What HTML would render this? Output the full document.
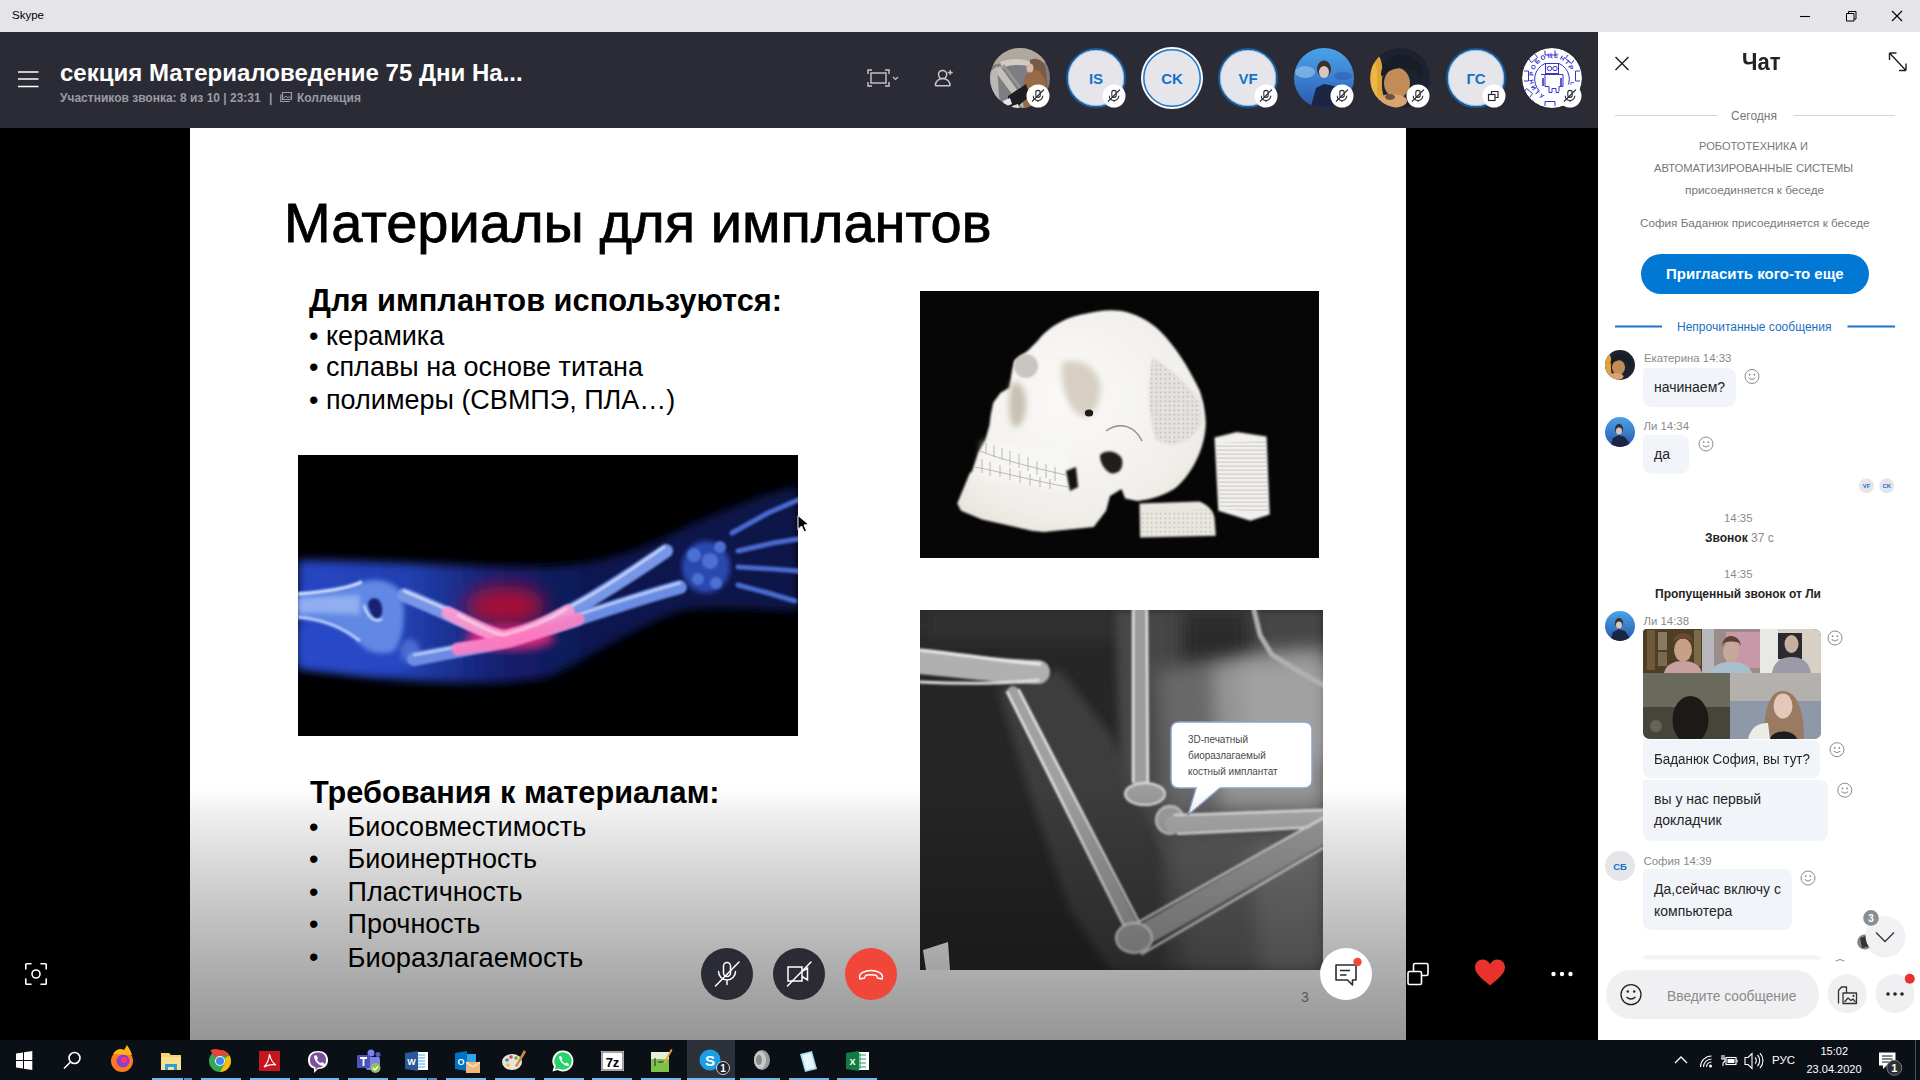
<!DOCTYPE html>
<html><head><meta charset="utf-8">
<style>
*{margin:0;padding:0;box-sizing:border-box}
html,body{width:1920px;height:1080px;overflow:hidden}
body{position:relative;font-family:"Liberation Sans",sans-serif;background:#000}
.a{position:absolute}
.t{position:absolute;white-space:nowrap;line-height:1}
svg{position:absolute;overflow:visible}
</style></head><body>

<!-- ===== title bar ===== -->
<div class="a" style="left:0;top:0;width:1920px;height:32px;background:#e5e4e9"></div>
<div class="t" style="left:12px;top:10px;font-size:11.5px;color:#000">Skype</div>
<svg style="left:0;top:0" width="1920" height="32">
  <path d="M1800 16.5H1810" stroke="#000" stroke-width="1.1"/>
  <path d="M1846.5 13.5h7.5v7.5h-7.5z M1848.5 13.5v-2h7.5v7.5h-2" fill="none" stroke="#000" stroke-width="1"/>
  <path d="M1892 11L1902 21M1902 11L1892 21" stroke="#000" stroke-width="1.1"/>
</svg>

<!-- ===== header ===== -->
<div class="a" style="left:0;top:32px;width:1598px;height:96px;background:#2b2b35"></div>
<svg style="left:0;top:32px" width="1598" height="96">
  <path d="M18 40H38.5M18 47H38.5M18 54.5H38.5" stroke="#fff" stroke-width="1.6"/>
</svg>
<div class="t" style="left:60px;top:61px;font-size:24px;font-weight:700;color:#fff">секция Материаловедение 75 Дни На...</div>
<div class="t" style="left:60px;top:91.5px;font-size:12px;font-weight:700;color:#9b9ba3">Участников звонка: 8 из 10 | 23:31</div>
<div class="t" style="left:269px;top:91.5px;font-size:12px;font-weight:700;color:#9b9ba3">|</div>
<svg style="left:280px;top:89px" width="14" height="14">
  <path d="M2.5 3.5h9v7h-9z" fill="none" stroke="#9b9ba3" stroke-width="1.2"/>
  <path d="M0.8 5.5v7h9" fill="none" stroke="#9b9ba3" stroke-width="1.2"/>
  <path d="M3.5 9.5l2.5-2.5 2 2 1.5-1.5 2 2" fill="none" stroke="#9b9ba3" stroke-width="1"/>
</svg>
<div class="t" style="left:297px;top:91.5px;font-size:12px;font-weight:700;color:#9b9ba3">Коллекция</div>

<!-- header icons -->
<svg style="left:860px;top:60px" width="110" height="36">
  <!-- screen frame icon -->
  <g fill="none" stroke="#c8c8cc" stroke-width="1.4">
    <rect x="11" y="13" width="15" height="10"/>
    <path d="M8 14v-4h4 M25 10h4v4 M29 22v4h-4 M12 26h-4v-4"/>
    <path d="M33 17l2.5 2.5 2.5-2.5" stroke-width="1.1"/>
  </g>
  <!-- add person -->
  <g fill="none" stroke="#c8c8cc" stroke-width="1.5">
    <circle cx="82.6" cy="14.5" r="4.1"/>
    <path d="M75.3 25.8h14.8 M75.3 25.8c0-4.6 3.3-7.3 7.4-7.3s7.4 2.7 7.4 7.3"/>
    <path d="M90.2 10v5 M87.7 12.5h5" stroke-width="1.3"/>
  </g>
</svg>

<!-- avatars -->
<svg style="left:0;top:0" width="1598" height="128">
  <defs>
    <clipPath id="c1"><circle cx="1020" cy="78" r="30"/></clipPath>
    <clipPath id="c5"><circle cx="1324" cy="78" r="30"/></clipPath>
    <clipPath id="c6"><circle cx="1400" cy="78" r="30"/></clipPath>
    <clipPath id="c8"><circle cx="1552" cy="78" r="30"/></clipPath>
    <linearGradient id="sky" x1="0" y1="0" x2="0" y2="1">
      <stop offset="0" stop-color="#4aa3ea"/><stop offset="0.5" stop-color="#3b7fd0"/><stop offset="1" stop-color="#2a58a8"/>
    </linearGradient>
    <g id="mic">
      <circle r="11.5" fill="#fff"/>
      <g fill="none" stroke="#2b2b35" stroke-width="1.1">
        <rect x="-2.2" y="-5.6" width="4.4" height="7" rx="2.2"/>
        <path d="M-4.8 -0.3a4.8 4.8 0 0 0 9.6 0M0 4.5v1.6"/>
        <path d="M-6 5.5L6 -6.5" stroke-width="1.1"/>
      </g>
    </g>
  </defs>
  <!-- 1 photo girl -->
  <g clip-path="url(#c1)">
    <rect x="990" y="48" width="60" height="60" fill="#7c7e84"/>
    <path d="M990 48h60v16c-14-4-34-6-60 2z" fill="#b0a89c"/>
    <path d="M1000 62 C1010 58 1022 58 1032 62 L1036 68 C1024 64 1010 64 1002 68z" fill="#d0ccc4"/>
    <path d="M1000 66 L1036 116 L1030 118 L994 70z" fill="#c4c0b8"/>
    <path d="M1004 64 L1040 112 L1038 114 L1002 66z" fill="#9a9690"/>
    <path d="M990 72 L997 66 L1000 110 L990 110z" fill="#bab8b4"/>
    <path d="M1030 60 C1038 56 1046 62 1046 72 L1048 92 L1036 92 C1032 84 1030 72 1030 60z" fill="#7a5a42"/>
    <path d="M1036 70 C1044 72 1048 84 1048 100 L1046 112 L1024 112 C1022 98 1022 84 1026 74z" fill="#9a6a48"/>
    <ellipse cx="1030" cy="68" rx="3.5" ry="4.5" fill="#d8b8a8"/>
    <path d="M1008 96 L1026 84 L1030 96 L1016 108 L1008 106z" fill="#1e1e22"/>
    <path d="M1003 101 L1010 98 L1012 104 L1005 107z" fill="#e8e8ea"/>
    <path d="M1012 106 L1018 104 L1020 110 L1013 112z" fill="#e0e0e2"/>
  </g>
  <!-- 2 IS -->
  <circle cx="1096" cy="78" r="29" fill="#e6e6ea" stroke="#195a98" stroke-width="2"/>
  <circle cx="1096" cy="78" r="27.6" fill="none" stroke="#7fb6ea" stroke-width="0.8"/>
  <text x="1096" y="83.6" text-anchor="middle" font-family="Liberation Sans" font-weight="700" font-size="15" fill="#1572cc">IS</text>
  <!-- 3 CK -->
  <circle cx="1172" cy="78" r="31" fill="#fff"/>
  <circle cx="1172" cy="78" r="29.4" fill="#e6e6ea"/>
  <circle cx="1172" cy="78" r="28.2" fill="none" stroke="#1e78cf" stroke-width="1.5"/>
  <text x="1172" y="83.6" text-anchor="middle" font-family="Liberation Sans" font-weight="700" font-size="15" fill="#1572cc">CK</text>
  <!-- 4 VF -->
  <circle cx="1248" cy="78" r="29" fill="#e6e6ea" stroke="#195a98" stroke-width="2"/>
  <circle cx="1248" cy="78" r="27.6" fill="none" stroke="#7fb6ea" stroke-width="0.8"/>
  <text x="1248" y="83.6" text-anchor="middle" font-family="Liberation Sans" font-weight="700" font-size="15" fill="#1572cc">VF</text>
  <!-- 5 photo blue -->
  <g clip-path="url(#c5)">
    <rect x="1294" y="48" width="60" height="60" fill="url(#sky)"/>
    <ellipse cx="1305" cy="72" rx="10" ry="6" fill="#8fc0ee" opacity="0.7"/>
    <ellipse cx="1343" cy="76" rx="9" ry="4" fill="#3466b8" opacity="0.8"/>
    <ellipse cx="1324" cy="69" rx="7" ry="8.5" fill="#3a3030"/>
    <ellipse cx="1324" cy="72" rx="5" ry="6" fill="#d9c6c0"/>
    <path d="M1310 110 L1316 88 L1324 84 L1334 86 L1342 96 L1346 110z" fill="#1c2644"/>
  </g>
  <!-- 6 photo woman -->
  <g clip-path="url(#c6)">
    <rect x="1370" y="48" width="60" height="60" fill="#1c2230"/>
    <path d="M1368 52 C1380 50 1384 62 1382 80 C1381 94 1385 102 1392 110 L1368 110 Z" fill="#dfa338"/>
    <path d="M1372 60 C1378 64 1378 76 1377 88 C1377 96 1380 102 1384 108 L1370 108z" fill="#f0c050" opacity="0.7"/>
    <ellipse cx="1397" cy="83" rx="13" ry="15" fill="#c28c58"/>
    <path d="M1381 74 C1382 58 1398 52 1410 56 C1420 60 1424 70 1422 80 L1416 72 C1406 66 1394 66 1381 76z" fill="#181d28"/>
    <ellipse cx="1392" cy="101" rx="15" ry="7" fill="#d9a472"/>
    <ellipse cx="1390" cy="97" rx="5" ry="3" fill="#2a1a14" opacity="0.6"/>
  </g>
  <!-- 7 ГС -->
  <circle cx="1476" cy="78" r="29" fill="#e6e6ea" stroke="#195a98" stroke-width="2"/>
  <circle cx="1476" cy="78" r="27.6" fill="none" stroke="#7fb6ea" stroke-width="0.8"/>
  <text x="1476" y="83.6" text-anchor="middle" font-family="Liberation Sans" font-weight="700" font-size="15" fill="#1572cc">ГС</text>
  <!-- 8 robot logo -->
  <g clip-path="url(#c8)">
    <rect x="1522" y="48" width="60" height="60" fill="#2b2b35"/>
    <circle cx="1552" cy="78" r="30" fill="#fff"/>
    <path id="arcTop" d="M1533.5 76 A18 18 0 0 1 1570.5 76" fill="none"/>
    <path id="arcBot" d="M1529 80 A23 23 0 0 0 1546 100" fill="none"/>
    <g fill="none" stroke="#3434c8" stroke-width="1">
      <path d="M1545 50.5v4.5h10v-4.5 M1568 55l-2.5 3.5 6 5 2.5-3.5 M1580 71h-4.5v10h4.5 M1574 93l-2.5-3.5-6 5 2.5 3.5 M1545 106v-4.5h10v4.5 M1530 97l2.5-3.5-6-5-2.5 3.5 M1524 81h4.5v-10h-4.5 M1529 59l2.5 3.5 6-5-2.5-3.5"/>
      <path d="M1539.5 91A17 17 0 0 1 1545 63.5 M1559 63.5A17 17 0 0 1 1564.5 91"/>
      <rect x="1545.5" y="63.5" width="13" height="10"/>
      <circle cx="1549.5" cy="68.5" r="2.2"/><circle cx="1555" cy="68.5" r="2.2"/>
      <path d="M1541 74.5h22v12h-4v6h-3v-4h-4v4h-3v-6h-4v-12z"/>
      <path d="M1543 78v8 M1561 78v8" stroke-width="1.6"/>
    </g>
    <text font-family="Liberation Sans" font-weight="700" font-size="6.2" fill="#3030d0"><textPath href="#arcTop" textLength="52" lengthAdjust="spacing">РОБОЦЕНТР</textPath></text>
    <text font-family="Liberation Sans" font-weight="700" font-size="6" fill="#3030d0"><textPath href="#arcBot" textLength="24" lengthAdjust="spacing">НИТУ</textPath></text>
    <text x="1570" y="86" font-family="Liberation Sans" font-weight="700" font-size="6" fill="#3030d0">С</text>
  </g>
  <use href="#mic" x="1038" y="96"/>
  <use href="#mic" x="1114" y="96"/>
  <use href="#mic" x="1266" y="96"/>
  <use href="#mic" x="1342" y="96"/>
  <use href="#mic" x="1418" y="96"/>
  <use href="#mic" x="1570" y="96"/>
  <circle cx="1494" cy="96" r="11.5" fill="#fff"/>
  <g fill="none" stroke="#2b2b35" stroke-width="1.2">
    <rect x="1488.5" y="94.5" width="6.5" height="6"/>
    <path d="M1491.5 94.5v-3h6.5v6h-3"/>
  </g>
</svg>

<!-- ===== left / right black ===== -->
<div class="a" style="left:0;top:128px;width:190px;height:912px;background:#000"></div>
<div class="a" style="left:1406px;top:128px;width:192px;height:912px;background:#000"></div>

<!-- ===== slide ===== -->
<div id="slide" class="a" style="left:190px;top:128px;width:1216px;height:912px;background:#fff;overflow:hidden">
</div>
<div class="t" style="left:284px;top:194.5px;font-size:56px;color:#000;-webkit-text-stroke:0.8px #000">Материалы для имплантов</div>
<div class="t" style="left:309px;top:285.5px;font-size:30.8px;font-weight:700;color:#000">Для имплантов используются:</div>
<div class="t" style="left:309px;top:322.6px;font-size:27px;color:#000">•</div>
<div class="t" style="left:326px;top:322.6px;font-size:27px;color:#000">керамика</div>
<div class="t" style="left:309px;top:354.3px;font-size:27px;color:#000">•</div>
<div class="t" style="left:326px;top:354.3px;font-size:27px;color:#000">сплавы на основе титана</div>
<div class="t" style="left:309px;top:386.7px;font-size:27px;color:#000">•</div>
<div class="t" style="left:326px;top:386.7px;font-size:27px;color:#000">полимеры (СВМПЭ, ПЛА…)</div>

<div class="t" style="left:310px;top:777.5px;font-size:30.7px;font-weight:700;color:#000">Требования к материалам:</div>
<div class="t" style="left:309px;top:813.8px;font-size:27px;color:#000">•</div>
<div class="t" style="left:347.5px;top:813.8px;font-size:27px;color:#000">Биосовместимость</div>
<div class="t" style="left:309px;top:846.3px;font-size:27px;color:#000">•</div>
<div class="t" style="left:347.5px;top:846.3px;font-size:27px;color:#000">Биоинертность</div>
<div class="t" style="left:309px;top:878.9px;font-size:27px;color:#000">•</div>
<div class="t" style="left:347.5px;top:878.9px;font-size:27px;color:#000">Пластичность</div>
<div class="t" style="left:309px;top:911.4px;font-size:27px;color:#000">•</div>
<div class="t" style="left:347.5px;top:911.4px;font-size:27px;color:#000">Прочность</div>
<div class="t" style="left:309px;top:943.5px;font-size:27px;color:#000">•</div>
<div class="t" style="left:347.5px;top:943.5px;font-size:27.3px;color:#000">Биоразлагаемость</div>
<div class="t" style="left:1301px;top:990px;font-size:14px;color:#8a8a8a">3</div>

<!-- IMAGES -->
<div id="img-arm" class="a" style="left:298px;top:455px;width:500px;height:281px;background:#000;overflow:hidden">
<svg style="left:0;top:0" width="500" height="281" viewBox="0 0 500 281">
  <defs>
    <filter id="b6" x="-20%" y="-20%" width="140%" height="140%"><feGaussianBlur stdDeviation="5"/></filter>
    <filter id="b3" x="-30%" y="-30%" width="160%" height="160%"><feGaussianBlur stdDeviation="2.5"/></filter>
    <filter id="b1" x="-30%" y="-30%" width="160%" height="160%"><feGaussianBlur stdDeviation="0.9"/></filter>
    <filter id="b12" x="-50%" y="-50%" width="200%" height="200%"><feGaussianBlur stdDeviation="10"/></filter>
    <linearGradient id="st" x1="0" y1="0" x2="1" y2="0">
      <stop offset="0" stop-color="#2846c4"/><stop offset="0.22" stop-color="#2240b0"/><stop offset="0.4" stop-color="#142070"/><stop offset="0.6" stop-color="#0e1850"/><stop offset="1" stop-color="#0c1548"/>
    </linearGradient>
  </defs>
  <!-- soft tissue -->
  <path d="M0 105 C80 106 180 112 250 112 C300 110 340 95 368 82 C390 70 410 62 428 55 C450 46 475 36 500 31 L500 156 C460 156 420 150 383 156 C330 175 290 205 250 222 C180 235 90 225 0 213 Z" fill="url(#st)" filter="url(#b6)"/>
  <path d="M0 170 C40 172 80 180 110 196 C130 210 100 222 60 218 C40 215 20 214 0 212 Z" fill="#2a4ccc" filter="url(#b6)" opacity="0.7"/>
  <!-- humerus + elbow -->
  <path d="M0 139 C30 137 50 133 64 127 C80 122 98 126 104 140 C108 160 106 185 96 196 C80 202 66 196 58 184 C45 172 25 165 0 163 Z" fill="#6088e4" filter="url(#b3)"/>
  <path d="M0 143 C30 141 50 140 62 140 L62 160 C40 158 20 158 0 158 Z" fill="#9cb8f4" filter="url(#b3)" opacity="0.8"/>
  <path d="M0 139 C30 137 50 133 64 127" fill="none" stroke="#d0e0ff" stroke-width="3.5" filter="url(#b1)"/>
  <path d="M0 162 C25 164 45 172 62 186" fill="none" stroke="#b8d0ff" stroke-width="3" filter="url(#b1)"/>
  <path d="M70 150 C70 140 86 140 84 158 C82 166 74 166 70 150z" fill="#142070" filter="url(#b1)"/>
  <path d="M66 150 C70 164 78 168 84 164" fill="none" stroke="#e0ecff" stroke-width="2" filter="url(#b1)"/>
  <ellipse cx="112" cy="196" rx="10" ry="12" fill="#4a6cd0" filter="url(#b3)"/>
  <!-- forearm bones -->
  <g fill="none" stroke-linecap="round" filter="url(#b1)">
    <path d="M106 140 C150 158 185 176 206 182 C260 170 320 128 368 96" stroke="#7896e6" stroke-width="14"/>
    <path d="M106 136 C150 154 185 172 206 178 C260 166 320 124 366 92" stroke="#d8e6ff" stroke-width="2"/>
    <path d="M116 204 C160 196 190 190 210 186 C270 168 330 146 382 132" stroke="#6c8ce4" stroke-width="14"/>
    <path d="M116 200 C160 192 190 186 210 182 C270 164 330 142 382 128" stroke="#c8dafc" stroke-width="2"/>
  </g>
  <!-- wrist & hand -->
  <ellipse cx="408" cy="112" rx="24" ry="26" fill="#2c48b0" filter="url(#b3)"/>
  <g fill="#4e70d4" filter="url(#b1)"><circle cx="396" cy="100" r="7"/><circle cx="412" cy="106" r="8"/><circle cx="400" cy="124" r="6"/><circle cx="418" cy="128" r="6"/><circle cx="422" cy="92" r="6"/></g>
  <g stroke="#4a6ad0" stroke-width="5" stroke-linecap="round" filter="url(#b1)">
    <path d="M434 78 L470 58 L500 45"/><path d="M440 96 L475 88 L500 84"/><path d="M440 112 L475 114 L500 116"/><path d="M440 130 L470 138 L497 146"/>
  </g>
  <!-- red glow -->
  <ellipse cx="207" cy="151" rx="40" ry="20" fill="#b00c36" filter="url(#b12)" opacity="0.95"/>
  <ellipse cx="212" cy="183" rx="45" ry="12" fill="#ff2a80" filter="url(#b6)" opacity="0.8"/>
  <g fill="none" stroke-linecap="round" filter="url(#b1)" opacity="0.9">
    <path d="M150 158 C185 176 195 180 206 182 C230 177 250 168 270 156" stroke="#ff9ad0" stroke-width="13"/>
    <path d="M160 194 C190 190 200 188 210 186 C235 179 255 172 280 164" stroke="#ff80c4" stroke-width="13"/>
    <path d="M160 160 C190 176 200 180 206 180 C230 174 250 166 268 154" stroke="#ffe0f0" stroke-width="2"/>
  </g>
</svg>
</div>
<div id="img-skull" class="a" style="left:920px;top:291px;width:399px;height:267px;background:#060606;overflow:hidden">
<svg style="left:0;top:0" width="399" height="267" viewBox="0 0 399 267">
  <defs>
    <radialGradient id="sk" cx="0.45" cy="0.4" r="0.85">
      <stop offset="0" stop-color="#fbfaf8"/><stop offset="0.6" stop-color="#f1efea"/><stop offset="1" stop-color="#dcd7cc"/>
    </radialGradient>
    <filter id="sb" x="-20%" y="-20%" width="140%" height="140%"><feGaussianBlur stdDeviation="1"/></filter>
    <filter id="sb3" x="-30%" y="-30%" width="160%" height="160%"><feGaussianBlur stdDeviation="3"/></filter>
    <pattern id="dots" width="4.5" height="4.5" patternUnits="userSpaceOnUse"><circle cx="2.2" cy="2.2" r="0.9" fill="#77716a"/></pattern>
    <pattern id="grid" width="3.5" height="4" patternUnits="userSpaceOnUse"><rect width="3.5" height="1.2" y="2.5" fill="#b8b4ac"/></pattern>
  </defs>
  <path d="M69.5 134 L70.7 124 L73.2 111.7 L80.6 101.7 L89.3 96.8 L91.8 80.6 L94.3 69.5 L108 59.6 L117.9 49.6 C125 40 140 28 161.3 23.6 C175 20 190 18 200 19.8 C215 22 230 30 240 40 C255 55 268 75 279.6 99.3 C284 112 286 125 285.8 134 C285 148 281 160 276 170 C270 182 262 192 254.8 197.5 C245 204 230 209 217.6 209.9 L205.2 207.4 L201.5 198 L190 205 L186.1 219.8 L173.7 236 L161.3 237.2 L124 241 L111.7 239.7 L62 228.5 L41 219.8 L37.2 212.4 L49.6 182.6 L52.1 180.1 L58.3 161.5 L65 150 Z" fill="url(#sk)" filter="url(#sb)"/>
  <!-- shading on face -->
  <path d="M62 150 L146 158 L150 200 L58 186 Z" fill="#f8f8f6" filter="url(#sb3)" opacity="0.7"/>
  <path d="M142 72 C156 66 176 74 180 92 C182 108 176 122 166 126 C150 124 140 100 142 72z" fill="#d6cfc2" filter="url(#sb3)"/>
  <ellipse cx="169" cy="122" rx="4.2" ry="3.6" fill="#1e1a16"/>
  <ellipse cx="106" cy="75" rx="12" ry="12" fill="#c9c5c0" filter="url(#sb)"/>
  <path d="M92 92 C98 88 106 96 106 112 C106 128 100 138 94 136 C88 130 88 104 92 92z" fill="#c7bfb0" filter="url(#sb3)"/>
  <path d="M186 140 C200 130 215 135 222 150" fill="none" stroke="#6a6258" stroke-width="1.5" opacity="0.7"/>
  <!-- dark gaps -->
  <path d="M146 180 L156 176 L158 196 L150 200z" fill="#141210" filter="url(#sb)"/>
  <path d="M180 164 C186 158 198 160 202 168 C204 178 198 184 190 182 C184 178 180 172 180 164z" fill="#231f1b" filter="url(#sb)"/>
  <!-- teeth -->
  <g stroke="#a8a298" stroke-width="1" opacity="0.75" fill="none">
    <path d="M60 160 C80 168 110 176 146 184"/>
    <path d="M55 176 C85 182 115 190 148 196"/>
    <path d="M66 152v10 M74 154v12 M82 157v12 M90 160v14 M99 163v14 M108 166v14 M117 170v14 M126 173v14 M135 176v14 M62 168v14 M70 171v14 M80 174v12 M90 177v12 M100 180v12 M110 183v12 M120 186v10 M130 188v10"/>
  </g>
  <!-- mesh patch -->
  <path d="M232 66 C250 76 270 94 282 112 L282 132 C276 146 264 154 250 154 L236 150 C228 130 226 100 232 66z" fill="#e4e2de" filter="url(#sb)"/>
  <path d="M232 68 C250 78 268 95 280 113 L280 131 C274 144 263 152 250 152 L238 149 C230 130 228 102 232 68z" fill="url(#dots)" opacity="0.4"/>
  <!-- blocks -->
  <path d="M219.5 212.4 L279.6 210.5 C288 214 294 220 294.5 227.3 L295.8 244.7 L220.1 246.5 Z" fill="#e9e6e0" filter="url(#sb)"/>
  <path d="M222 220 L292 218 L294 244 L222 245z" fill="url(#dots)" opacity="0.35"/>
  <path d="M294.5 146.6 L316.9 141 L346.6 145.4 L349.7 223.6 L330.5 229.8 L298.3 219.8 Z" fill="#f2f0ec" filter="url(#sb)"/>
  <path d="M296 152 L346 150 L348 222 L300 218z" fill="url(#grid)" opacity="0.6"/>
</svg>
</div>
<div id="img-cat" class="a" style="left:920px;top:610px;width:403px;height:360px;background:#262626;overflow:hidden">
<svg style="left:0;top:0" width="403" height="360" viewBox="0 0 403 360">
  <defs>
    <filter id="cb" x="-30%" y="-30%" width="160%" height="160%"><feGaussianBlur stdDeviation="9"/></filter>
    <filter id="cb4" x="-30%" y="-30%" width="160%" height="160%"><feGaussianBlur stdDeviation="4"/></filter>
    <filter id="cb2" x="-20%" y="-20%" width="140%" height="140%"><feGaussianBlur stdDeviation="0.9"/></filter>
  </defs>
  <rect width="403" height="360" fill="#262626"/>
  <rect width="200" height="30" fill="#303030" filter="url(#cb)"/>
  <!-- soft tissue -->
  <path d="M78 80 L140 60 L195 130 L235 240 L265 300 L250 360 L190 360 L150 300 L115 200 Z" fill="#3c3c3c" filter="url(#cb4)"/>
  <path d="M195 0 L403 0 L403 360 L245 360 L240 250 L200 160 Z" fill="#474747" filter="url(#cb4)"/>
  <path d="M262 0 L330 0 L330 55 L262 60 Z" fill="#2c2c2c" filter="url(#cb)"/>
  <path d="M236 60 L310 48 L403 38 L403 205 L245 205 Z" fill="#686868" filter="url(#cb)"/>
  <path d="M292 58 L340 45 L403 40 L403 200 L300 198 Z" fill="#949494" filter="url(#cb)"/>
  <path d="M320 60 L403 55 L403 150 L330 160 Z" fill="#a2a2a2" filter="url(#cb)"/>
  <path d="M245 225 L403 218 L403 360 L265 360 Z" fill="#5c5c5c" filter="url(#cb)"/>
  <path d="M330 240 L403 230 L403 360 L340 360 Z" fill="#727272" filter="url(#cb)"/>
  <!-- bones -->
  <g filter="url(#cb2)" fill="none" stroke-linecap="round">
    <path d="M0 52 C40 56 90 62 118 62" stroke="#b0b0b0" stroke-width="24"/>
    <path d="M0 40 C40 44 90 52 120 54" stroke="#ececec" stroke-width="3"/>
    <path d="M0 72 C40 74 90 74 118 70" stroke="#e0e0e0" stroke-width="3"/>
    <path d="M93 82 L212 316" stroke="#a0a0a0" stroke-width="12"/>
    <path d="M87 82 L205 318 M99 80 L219 312" stroke="#f0f0f0" stroke-width="2.2"/>
    <path d="M220 0 L220 172" stroke="#9c9c9c" stroke-width="15"/>
    <path d="M213 0 L213 172 M227 0 L228 172" stroke="#ececec" stroke-width="2.2"/>
    <ellipse cx="225" cy="184" rx="20" ry="11" fill="#9c9c9c" stroke="#e0e0e0" stroke-width="2"/>
    <circle cx="250" cy="210" r="14" fill="#a0a0a0" stroke="#cfcfcf" stroke-width="2"/>
    <path d="M255 214 L403 208" stroke="#aaaaaa" stroke-width="19"/>
    <path d="M255 205 L403 200 M258 224 L403 217" stroke="#e8e8e8" stroke-width="2.2"/>
    <path d="M215 330 L403 222" stroke="#9a9a9a" stroke-width="22"/>
    <path d="M208 318 L403 208 M222 344 L403 238" stroke="#e0e0e0" stroke-width="2.2"/>
    <ellipse cx="214" cy="328" rx="18" ry="15" fill="#a0a0a0" stroke="#e0e0e0" stroke-width="2"/>
    <path d="M334 0 L340 25 L352 45 L380 62 L403 75" stroke="#b0b0b0" stroke-width="5"/>
  </g>
  <path d="M3 340 L28 332 L30 360 L6 360 Z" fill="#f0f0f0"/>
  <!-- speech bubble -->
  <path d="M259 112 L384 112 Q392 112 392 120 L392 170 Q392 178 384 178 L300 178 L268 205 L276 178 L259 178 Q251 178 251 170 L251 120 Q251 112 259 112 Z" fill="#fff" stroke="#8aa4c8" stroke-width="1.5"/>
  <g font-family="Liberation Sans" font-size="10.5" fill="#4a4a4a" transform="translate(268 0) scale(0.95 1)">
    <text x="0" y="133">3D-печатный</text><text x="0" y="149">биоразлагаемый</text><text x="0" y="165">костный имплантат</text>
  </g>
</svg>
</div>

<!-- gradient overlay -->
<div class="a" style="left:190px;top:788px;width:1216px;height:252px;background:linear-gradient(rgba(0,0,0,0) 0%,rgba(0,0,0,0.05) 8%,rgba(0,0,0,0.13) 25%,rgba(0,0,0,0.21) 45%,rgba(0,0,0,0.29) 64%,rgba(0,0,0,0.36) 84%,rgba(0,0,0,0.41) 100%)"></div>

<svg style="left:0;top:0" width="1" height="1"><path d="M798 515.5 L798 529.5 L801.5 526 L804.2 531.8 L806.6 530.8 L804 525 L808.8 524.6 Z" fill="#000" stroke="#fff" stroke-width="1" stroke-linejoin="round"/></svg>
<!-- ===== call controls ===== -->
<svg style="left:0;top:940px" width="1598" height="70">
  <!-- screenshot icon -->
  <g fill="none" stroke="#fff" stroke-width="1.6" stroke-linecap="round">
    <path d="M25.8 29V24.5Q25.8 23.8 26.5 23.8H31 M41 23.8H45.5Q46.2 23.8 46.2 24.5V29 M46.2 39V43.5Q46.2 44.2 45.5 44.2H41 M31 44.2H26.5Q25.8 44.2 25.8 43.5V39"/>
    <circle cx="36" cy="34" r="4"/>
  </g>
  <circle cx="727" cy="34" r="26" fill="#2b2b35"/>
  <circle cx="799" cy="34" r="26" fill="#2b2b35"/>
  <circle cx="871" cy="34" r="26" fill="#f0473a"/>
  <g fill="none" stroke="#fff" stroke-width="1.5" stroke-linecap="round">
    <rect x="723.5" y="22.5" width="7" height="14" rx="3.5"/>
    <path d="M718.5 31.5a8.5 8.5 0 0 0 17 0 M727 40v4.5"/>
    <path d="M715.5 46L739 22"/>
    <path d="M788 27h14v14h-14z M802 31.5l5.5-3.5v12l-5.5-3.5"/>
    <path d="M787.5 46L811 22"/>
  </g>
  <path d="M859.5 36.5c0-3 5-6 11.5-6s11.5 3 11.5 6l-0.5 2.5-4.5-1-1-2.5c-3.5-1-7.5-1-11 0l-1 2.5-4.5 1z" fill="none" stroke="#fff" stroke-width="1.4" stroke-linejoin="round"/>
  <!-- chat button -->
  <circle cx="1346" cy="34" r="26" fill="#fff"/>
  <path d="M1336 25h20v15h-3.5v5l-5-5h-11.5z" fill="none" stroke="#2b2b35" stroke-width="1.6" stroke-linejoin="round"/>
  <path d="M1340 30.5h10 M1340 35h6.5" stroke="#2b2b35" stroke-width="1.6"/>
  <circle cx="1357.5" cy="22" r="4.2" fill="#f0473a"/>
  <!-- restore -->
  <g fill="none" stroke="#fff" stroke-width="1.6">
    <rect x="1408" y="31.5" width="13.5" height="13" rx="1.5"/>
    <path d="M1413.5 31.5v-6.5q0-1.5 1.5-1.5h11.5q1.5 0 1.5 1.5v9q0 1.5-1.5 1.5h-5"/>
  </g>
  <!-- heart -->
  <path d="M1490 45.5C1485 41 1475 34.5 1475 27.5C1475 22.5 1478.5 19.5 1482.5 19.5C1486 19.5 1488.5 21.5 1490 24C1491.5 21.5 1494 19.5 1497.5 19.5C1501.5 19.5 1505 22.5 1505 27.5C1505 34.5 1495 41 1490 45.5Z" fill="#e8322b"/>
  <circle cx="1553.5" cy="34" r="2.2" fill="#fff"/><circle cx="1562" cy="34" r="2.2" fill="#fff"/><circle cx="1570.5" cy="34" r="2.2" fill="#fff"/>
</svg>

<!-- ===== chat panel ===== -->
<div class="a" style="left:1598px;top:32px;width:322px;height:1008px;background:#fff"></div>
<svg style="left:1598px;top:32px" width="322" height="1008">
  <path d="M17.5 25L30.5 38M30.5 25L17.5 38" stroke="#222" stroke-width="1.5"/>
  <g fill="none" stroke="#222" stroke-width="1.4">
    <path d="M291.5 21L308 38.5 M291.5 21v7 M291.5 21h7 M308 38.5h-7 M308 38.5v-7"/>
  </g>
  <path d="M17 83.5H119.5 M195.5 83.5H297" stroke="#d4d4d8" stroke-width="1"/>
  <path d="M17 294.5H64 M249.5 294.5H297" stroke="#1a74cc" stroke-width="2"/>
</svg>
<div class="t" style="left:1742px;top:51.1px;font-size:23.4px;font-weight:700;color:#222;transform:scaleX(0.94);transform-origin:0 0">Чат</div>
<div class="t" style="left:1731px;top:109.5px;font-size:12px;color:#777">Сегодня</div>
<div class="t" style="left:1699px;top:141px;font-size:11.1px;color:#777">РОБОТОТЕХНИКА И</div>
<div class="t" style="left:1654px;top:163px;font-size:11.2px;color:#777">АВТОМАТИЗИРОВАННЫЕ СИСТЕМЫ</div>
<div class="t" style="left:1685px;top:185px;font-size:11.8px;color:#777">присоединяется к беседе</div>
<div class="t" style="left:1640px;top:217px;font-size:11.7px;color:#777">София Баданюк присоединяется к беседе</div>
<div class="a" style="left:1641px;top:254px;width:228px;height:39.5px;border-radius:20px;background:#0078d4"></div>
<div class="t" style="left:1666px;top:266px;font-size:15px;font-weight:700;color:#fff">Пригласить кого-то еще</div>
<div class="t" style="left:1677px;top:321px;font-size:12px;color:#1a6fc4">Непрочитанные сообщения</div>
<!-- messages -->
<svg style="left:1598px;top:340px" width="322" height="620">
  <defs>
    <clipPath id="ca1"><circle cx="22" cy="25" r="15"/></clipPath>
    <clipPath id="ca2"><circle cx="22" cy="92" r="15"/></clipPath>
    <clipPath id="ca3"><circle cx="22" cy="286" r="15"/></clipPath>
    <clipPath id="cimg"><path d="M49 289h166q8 0 8 8v94q0 8-8 8h-162q-8 0-8-8v-98q0-4 4-4z"/></clipPath>
    <linearGradient id="sky2" x1="0" y1="0" x2="0" y2="1"><stop offset="0" stop-color="#4aa3ea"/><stop offset="1" stop-color="#2a58a8"/></linearGradient>
    <g id="smile"><circle r="7" fill="none" stroke="#8a8a8a" stroke-width="1"/><circle cx="-2.3" cy="-1.8" r="0.9" fill="#8a8a8a"/><circle cx="2.3" cy="-1.8" r="0.9" fill="#8a8a8a"/><path d="M-3.3 1.5q3.3 3 6.6 0" fill="none" stroke="#8a8a8a" stroke-width="1"/></g>
  </defs>
  <!-- avatar Екатерина -->
  <g clip-path="url(#ca1)">
    <rect x="7" y="10" width="30" height="30" fill="#1c2230"/>
    <path d="M6 12 C12 11 14 17 13 26 C12.5 33 14.5 37 18 41 L6 41 Z" fill="#dfa338"/>
    <ellipse cx="20.5" cy="27.5" rx="6.5" ry="7.5" fill="#c28c58"/>
    <path d="M12.5 23 C13 15 21 12 27 14 C32 16 34 21 33 26 L30 22 C25 19 19 19 12.5 24z" fill="#181d28"/>
    <ellipse cx="18" cy="36.5" rx="7.5" ry="3.5" fill="#d9a472"/>
  </g>
  <!-- avatar Ли -->
  <g clip-path="url(#ca2)">
    <rect x="7" y="77" width="30" height="30" fill="url(#sky2)"/>
    <ellipse cx="21" cy="89" rx="4" ry="5" fill="#3a3030"/>
    <ellipse cx="21" cy="91" rx="3" ry="3.5" fill="#d9c6c0"/>
    <path d="M12 108 L15 98 L21 95 L27 97 L32 104 L34 108z" fill="#1c2644"/>
  </g>
  <g clip-path="url(#ca3)">
    <rect x="7" y="271" width="30" height="30" fill="url(#sky2)"/>
    <ellipse cx="21" cy="283" rx="4" ry="5" fill="#3a3030"/>
    <ellipse cx="21" cy="285" rx="3" ry="3.5" fill="#d9c6c0"/>
    <path d="M12 302 L15 292 L21 289 L27 291 L32 298 L34 302z" fill="#1c2644"/>
  </g>
  <!-- СБ avatar -->
  <circle cx="22" cy="526" r="15" fill="#e6e6ea"/>
  <text x="22" y="529.5" text-anchor="middle" font-family="Liberation Sans" font-weight="700" font-size="9.5" fill="#1572cc">СБ</text>
  <!-- read receipts -->
  <circle cx="268.5" cy="145.7" r="7.5" fill="#e6e6ea"/><text x="268.5" y="148" text-anchor="middle" font-family="Liberation Sans" font-weight="700" font-size="6" fill="#1572cc">VF</text>
  <circle cx="288.8" cy="145.7" r="7.5" fill="#e6e6ea"/><text x="288.8" y="148" text-anchor="middle" font-family="Liberation Sans" font-weight="700" font-size="6" fill="#1572cc">CK</text>
  <!-- bubbles -->
  <path d="M49 28h80q9 0 9 9v21q0 9-9 9h-75q-9 0-9-9v-26q0-4 4-4z" fill="#f1f4f8"/>
  <path d="M49 95h33q9 0 9 9v20.5q0 9-9 9h-28q-9 0-9-9v-25.5q0-4 4-4z" fill="#f1f4f8"/>
  <path d="M45 400h168q9 0 9 9v20.6q0 9-9 9h-159q-9 0-9-9v-29.6z" fill="#f1f4f8"/>
  <path d="M45 440h176q9 0 9 9v42.7q0 9-9 9h-167q-9 0-9-9v-51.7z" fill="#f1f4f8"/>
  <path d="M49 529h136q9 0 9 9v43q0 9-9 9h-131q-9 0-9-9v-48q0-4 4-4z" fill="#f1f4f8"/>
  <path d="M49 615h166q8 0 8.5 4.5h-178.5q0-4.5 4-4.5z" fill="#f1f4f8"/>
  <use href="#smile" x="154" y="36.5"/>
  <use href="#smile" x="108" y="104"/>
  <use href="#smile" x="237" y="298"/>
  <use href="#smile" x="239" y="409.7"/>
  <use href="#smile" x="246.8" y="450.2"/>
  <use href="#smile" x="210" y="538"/>
  <!-- chat image grid -->
  <g clip-path="url(#cimg)">
    <rect x="45" y="289" width="178" height="110" fill="#5a5040"/>
    <!-- top-left man -->
    <rect x="45" y="289" width="59" height="44" fill="#4e3e26"/>
    <rect x="49" y="290" width="8" height="40" fill="#6e5a38"/><rect x="60" y="292" width="9" height="18" fill="#8a7a60"/><rect x="60" y="312" width="9" height="14" fill="#7a6a50"/>
    <rect x="96" y="290" width="7" height="36" fill="#7a6a48"/>
    <ellipse cx="85" cy="310" rx="9" ry="11.5" fill="#c8a088"/>
    <path d="M75 304c0-8 6-11 10-11s10 3 10 11l-1 -3c-3-3-15-3-18 0z" fill="#6a4a30"/>
    <path d="M66 333c2-9 10-12 19-12s17 3 19 12z" fill="#c8a0a0"/>
    <!-- top-middle woman -->
    <rect x="104" y="289" width="58" height="44" fill="#9a8c88"/>
    <rect x="104" y="289" width="12" height="44" fill="#b8b8bc"/>
    <rect x="128" y="292" width="34" height="36" fill="#c898a8"/>
    <ellipse cx="133" cy="312" rx="8" ry="10" fill="#c8a898"/>
    <path d="M124 306c1-8 6-10 9-10s9 2 10 10l-2 -3c-3-2-12-2-15 0z" fill="#5a4030"/>
    <path d="M112 333c3-9 12-11 21-11s18 2 21 11z" fill="#a8c0cc"/>
    <!-- top-right man -->
    <rect x="162" y="289" width="61" height="44" fill="#d8d0c4"/>
    <rect x="162" y="289" width="18" height="44" fill="#e8e8e4"/>
    <rect x="180" y="293" width="24" height="26" fill="#2a2a30"/>
    <ellipse cx="193.5" cy="304" rx="7" ry="9" fill="#c8b0a0"/>
    <path d="M174 333c2-12 10-16 19.5-16s17.5 4 19.5 16z" fill="#9a9aa8"/>
    <!-- bottom-left dark -->
    <rect x="45" y="333" width="87" height="66" fill="#45453a"/>
    <rect x="45" y="333" width="87" height="34" fill="#6a6a5c"/>
    <ellipse cx="92.5" cy="380" rx="18" ry="24" fill="#1c1a16"/>
    <circle cx="58" cy="386" r="6" fill="#7a7a70" opacity="0.6"/>
    <!-- bottom-right girl -->
    <rect x="132" y="333" width="91" height="66" fill="#b4b0ac"/>
    <rect x="132" y="361" width="91" height="38" fill="#8e98a8"/>
    <path d="M166 399c0-26 4-48 19-48s21 22 21 48z" fill="#9a7a60"/>
    <ellipse cx="185" cy="366" rx="9.5" ry="12.5" fill="#e4c8bc"/>
    <path d="M172 399c3-10 24-10 27 0z" fill="#1c1c1e"/>
    <path d="M150 399c3-12 10-16 20-16l2 16z" fill="#ecebe8"/>
  </g>
  <!-- scroll button -->
  <circle cx="266.7" cy="602" r="7.5" fill="#8a8480"/>
  <path d="M262 598 L268 596 L272 606 L264 608z" fill="#3a3430"/>
  <circle cx="287" cy="597" r="20.5" fill="#000" opacity="0.06"/>
  <path d="M237.5 621 q4.5 -3 9 0" fill="none" stroke="#8a8a8a" stroke-width="1"/>
  <circle cx="287" cy="595.7" r="19.5" fill="#f2f2f4"/>
  <path d="M278 592.5l9 9 9-9" fill="none" stroke="#333" stroke-width="1.3"/>
  <circle cx="273" cy="577.9" r="7.8" fill="#8a8d91"/>
  <text x="273" y="581.6" text-anchor="middle" font-family="Liberation Sans" font-weight="700" font-size="10" fill="#fff">3</text>
</svg>
<div class="t" style="left:1644px;top:353px;font-size:11.4px;color:#8a8a8a">Екатерина 14:33</div>
<div class="t" style="left:1654px;top:380px;font-size:14px;color:#242424">начинаем?</div>
<div class="t" style="left:1643.5px;top:421px;font-size:11.4px;color:#8a8a8a">Ли 14:34</div>
<div class="t" style="left:1654px;top:447px;font-size:14px;color:#242424">да</div>
<div class="t" style="left:1724px;top:513px;font-size:11.4px;color:#8a8a8a">14:35</div>
<div class="t" style="left:1705px;top:531.5px;font-size:12px;color:#242424"><b>Звонок</b><span style="color:#8a8a8a"> 37 с</span></div>
<div class="t" style="left:1724px;top:568.5px;font-size:11.4px;color:#8a8a8a">14:35</div>
<div class="t" style="left:1655px;top:588px;font-size:12px;font-weight:700;color:#242424">Пропущенный звонок от Ли</div>
<div class="t" style="left:1643.5px;top:615.5px;font-size:11.4px;color:#8a8a8a">Ли 14:38</div>
<div class="t" style="left:1654px;top:751.5px;font-size:14px;color:#242424;transform:scaleX(0.957);transform-origin:0 0">Баданюк София, вы тут?</div>
<div class="t" style="left:1654px;top:791.5px;font-size:14px;color:#242424">вы у нас первый</div>
<div class="t" style="left:1654px;top:813px;font-size:14px;color:#242424">докладчик</div>
<div class="t" style="left:1643.5px;top:855.5px;font-size:11.4px;color:#8a8a8a">София 14:39</div>
<div class="t" style="left:1654px;top:882px;font-size:14px;color:#242424">Да,сейчас включу с</div>
<div class="t" style="left:1654px;top:904px;font-size:14px;color:#242424">компьютера</div>

<!-- input -->
<div class="a" style="left:1606px;top:969.5px;width:213px;height:49.5px;border-radius:25px;background:#f0f0f2"></div>
<svg style="left:1598px;top:960px" width="322" height="80">
  <g fill="none" stroke="#222" stroke-width="1.3">
    <circle cx="33" cy="34.6" r="10"/>
    <path d="M28.5 37q4.5 4 9 0"/>
  </g>
  <circle cx="29.8" cy="31.5" r="1.2" fill="#222"/><circle cx="36.2" cy="31.5" r="1.2" fill="#222"/>
  <circle cx="249.2" cy="33.8" r="19.5" fill="#f0f0f2"/>
  <circle cx="297" cy="33.8" r="19.5" fill="#f0f0f2"/>
  <g fill="none" stroke="#333" stroke-width="1.3" stroke-linejoin="round">
    <path d="M240.5 43.5v-13l3-3.5h5v6"/>
    <rect x="245" y="33" width="13.5" height="10.5"/>
    <path d="M246.5 42l3.5-4 3 2.5 2-1.5 2.5 3"/>
  </g>
  <circle cx="255.5" cy="35.8" r="1.1" fill="#333"/>
  <circle cx="290" cy="34" r="1.8" fill="#222"/><circle cx="297" cy="34" r="1.8" fill="#222"/><circle cx="304" cy="34" r="1.8" fill="#222"/>
  <circle cx="311.8" cy="18.8" r="5" fill="#e8322b"/>
</svg>
<div class="t" style="left:1667px;top:989.5px;font-size:13.8px;color:#8a8a8a">Введите сообщение</div>


<!-- ===== taskbar ===== -->
<div class="a" style="left:0;top:1040px;width:1920px;height:40px;background:#0b0f16"></div>
<div class="a" style="left:687px;top:1040px;width:48px;height:40px;background:#2c3139"></div>
<svg style="left:0;top:1040px" width="1920" height="40">
  <!-- running bars -->
  <g fill="#76b9ed">
    <rect x="152" y="38" width="31" height="2"/><rect x="184" y="38" width="8" height="2" fill="#5a8fc0"/>
    <rect x="201" y="38" width="40" height="2"/><rect x="250" y="38" width="40" height="2"/><rect x="299" y="38" width="40" height="2"/><rect x="348" y="38" width="40" height="2"/>
    <rect x="397" y="38" width="30" height="2"/><rect x="428" y="38" width="9" height="2" fill="#5a8fc0"/>
    <rect x="446" y="38" width="40" height="2"/><rect x="495" y="38" width="40" height="2"/><rect x="544" y="38" width="40" height="2"/><rect x="592" y="38" width="40" height="2"/><rect x="641" y="38" width="40" height="2"/>
    <rect x="687" y="38" width="48" height="2"/><rect x="740" y="38" width="40" height="2"/><rect x="789" y="38" width="40" height="2"/><rect x="837" y="38" width="40" height="2"/>
  </g>
  <!-- windows logo -->
  <g fill="#fff">
    <path d="M16 13.5l7-1v7.5h-7z"/><path d="M24 12.3l8.3-1.2v8.9h-8.3z"/>
    <path d="M16 21h7v7.5l-7-1z"/><path d="M24 21h8.3v8.9l-8.3-1.2z"/>
  </g>
  <!-- search -->
  <g fill="none" stroke="#fff" stroke-width="1.6"><circle cx="74.5" cy="18" r="5.5"/><path d="M70.5 22L64 28.5"/></g>
  <!-- firefox -->
  <circle cx="122" cy="21" r="11" fill="#ff7a1a"/>
  <circle cx="123" cy="21" r="6.5" fill="#8a3fd0"/>
  <path d="M113 14c3-5 8-6 11-4l3-5c2 3 4 6 5 10z" fill="#ffb51a"/>
  <circle cx="124" cy="20" r="3" fill="#ff3a6a"/>
  <!-- explorer -->
  <path d="M161 13h8l2 2h10v15h-20z" fill="#f6d26b"/>
  <rect x="161" y="17" width="20" height="13" fill="#f9e08f"/>
  <path d="M165 24h12v6h-3v-3h-6v3h-3z" fill="#2f9de0"/>
  <!-- chrome -->
  <circle cx="220" cy="21" r="11" fill="#34a853"/>
  <path d="M220 10a11 11 0 0 1 9.5 5.5h-9.5a5.5 5.5 0 0 0-4.8 2.8l-4.7-8.1A11 11 0 0 1 220 10z" fill="#ea4335"/>
  <path d="M229.5 15.5A11 11 0 0 1 220 32l4.8-8.2a5.5 5.5 0 0 0 0-5.5z" fill="#fbbc04"/>
  <circle cx="220" cy="21" r="5" fill="#fff"/><circle cx="220" cy="21" r="4" fill="#4285f4"/>
  <!-- acrobat -->
  <rect x="259" y="11" width="21" height="20" fill="#c4161c"/>
  <path d="M264 27c3-3 5-8 5.5-13 1 5 3 9 6.5 11-4-1-8 0-12 2z" fill="none" stroke="#fff" stroke-width="1.2"/>
  <!-- viber -->
  <path d="M308 20c0-6 4-9 10-9s10 3 10 9-4 9-10 9l-4 4v-4.5c-4-1-6-4-6-8.5z" fill="#fff"/>
  <path d="M310 20c0-5 3-7.5 8-7.5s8 2.5 8 7.5-3 7.5-8 7.5l-2.5 2.5v-2.7c-3-1-5.5-3-5.5-7.3z" fill="#7b519d"/>
  <path d="M314 16l2-1 2 3-1 1.5c1 2 2 3 3.5 3.5l1.5-1 3 2-1 2c-5 0-10-5-10-10z" fill="#fff"/>
  <!-- teams -->
  <circle cx="371" cy="13" r="3.5" fill="#7b83eb"/><circle cx="378" cy="14.5" r="2.5" fill="#5059c9"/>
  <rect x="366" y="17" width="14" height="13" rx="2" fill="#7b83eb"/>
  <rect x="357" y="15" width="13" height="13" rx="1" fill="#4b53bc"/>
  <path d="M360 18h7M363.5 18v8" stroke="#fff" stroke-width="1.8"/>
  <circle cx="375.5" cy="28" r="5" fill="#92c353"/>
  <path d="M373 28l2 2 3-3.5" fill="none" stroke="#fff" stroke-width="1.3"/>
  <!-- word -->
  <rect x="411" y="12" width="17" height="18" fill="#fff"/>
  <path d="M414 15h11M414 18h11M414 21h11M414 24h11M414 27h11" stroke="#41a5ee" stroke-width="1"/>
  <path d="M405 13l13-2v20l-13-2z" fill="#2b579a"/>
  <text x="411.5" y="25" text-anchor="middle" font-family="Liberation Sans" font-weight="700" font-size="9" fill="#fff">W</text>
  <!-- outlook -->
  <rect x="463" y="14" width="13" height="12" fill="#28a8ea"/>
  <path d="M455 13l12-2v20l-12-2z" fill="#0072c6"/>
  <text x="461" y="25" text-anchor="middle" font-family="Liberation Sans" font-weight="700" font-size="9" fill="#fff">O</text>
  <rect x="466" y="22" width="14" height="11" fill="#f2b97a"/>
  <path d="M466 22l7 5 7-5" fill="none" stroke="#fff" stroke-width="1"/>
  <!-- paint -->
  <ellipse cx="512" cy="22" rx="10" ry="8" fill="#e8e4d8"/>
  <circle cx="507" cy="20" r="1.8" fill="#3a8ad0"/><circle cx="511" cy="17" r="1.8" fill="#e04040"/><circle cx="516" cy="18" r="1.8" fill="#60b040"/><circle cx="508" cy="25" r="1.8" fill="#f0c020"/>
  <path d="M524 10l-9 16 2 1 9-15z" fill="#d08a40"/>
  <!-- whatsapp -->
  <path d="M563 10.5a10.5 10.5 0 1 1-5.3 19.6l-5.2 1.4 1.4-5A10.5 10.5 0 0 1 563 10.5z" fill="#fff"/>
  <path d="M563 12.3a8.7 8.7 0 1 1-4.5 16.1l-3.6 1 1-3.5a8.7 8.7 0 0 1 7.1-13.6z" fill="#25d366"/>
  <path d="M559 16.5l2-0.5 1.5 3-1 1c0.8 1.6 2 2.8 3.5 3.5l1-1 3 1.5-0.5 2c-4.5 0-9.5-5-9.5-9.5z" fill="#fff"/>
  <!-- 7z -->
  <rect x="601" y="11" width="23" height="20" fill="#fff"/>
  <rect x="602" y="12" width="21" height="18" fill="none" stroke="#222" stroke-width="0.8"/>
  <text x="612.5" y="26.5" text-anchor="middle" font-family="Liberation Sans" font-weight="700" font-size="13" fill="#000">7z</text>
  <!-- notepad green -->
  <rect x="651" y="12" width="18" height="20" fill="#7cc24a"/>
  <rect x="651" y="12" width="18" height="7" fill="#e8f0d8"/>
  <path d="M655 18v8M658 22h6" stroke="#222" stroke-width="1"/>
  <path d="M671 9l-8 14 1.5 1 8-14z" fill="#f0a830"/>
  <!-- skype -->
  <circle cx="710" cy="20" r="10.5" fill="#1b9ee6"/>
  <text x="710" y="25.5" text-anchor="middle" font-family="Liberation Sans" font-weight="700" font-size="15" fill="#fff">S</text>
  <circle cx="723" cy="28" r="6.5" fill="#1f252d" stroke="#cfd3d8" stroke-width="1"/>
  <text x="723" y="32" text-anchor="middle" font-family="Liberation Sans" font-weight="700" font-size="10" fill="#fff">1</text>
  <!-- speaker -->
  <ellipse cx="762" cy="20" rx="8" ry="10" fill="#9a9a9a"/>
  <ellipse cx="760" cy="20" rx="6" ry="9" fill="#c8c8c8"/>
  <ellipse cx="759" cy="20" rx="3" ry="5" fill="#8a8a8a"/>
  <!-- notepad -->
  <path d="M800 14l12-3 5 18-12 3z" fill="#a8d8f0"/>
  <path d="M802 15l9-2 4 15-9 2z" fill="#e8f6fc"/>
  <!-- excel -->
  <rect x="852" y="12" width="17" height="18" fill="#fff"/>
  <path d="M855 15h11M855 19h11M855 23h11M855 27h11M860 13v16" stroke="#21a366" stroke-width="1"/>
  <path d="M846 13l13-2v20l-13-2z" fill="#107c41"/>
  <text x="852.5" y="25" text-anchor="middle" font-family="Liberation Sans" font-weight="700" font-size="9" fill="#fff">X</text>

  <!-- tray -->
  <path d="M1675 23l6-6 6 6" fill="none" stroke="#fff" stroke-width="1.3"/>
  <g fill="none" stroke="#fff" stroke-width="1.1">
    <path d="M1700.5 27a11 11 0 0 1 11-11 M1703.5 27a8 8 0 0 1 8-8 M1706.5 27a5 5 0 0 1 5-5"/>
  </g>
  <circle cx="1710.5" cy="26" r="1.5" fill="#fff"/>
  <g fill="none" stroke="#fff" stroke-width="1.1">
    <rect x="1726" y="17.5" width="10" height="7"/>
    <path d="M1737 19.5v3 M1722 15v4 M1724 15v4 M1721 19h4v2l-2 2v3"/>
  </g>
  <rect x="1727.5" y="19" width="7" height="4" fill="#fff"/>
  <g fill="none" stroke="#fff" stroke-width="1.1">
    <path d="M1745 17.5h3l4-4v15l-4-4h-3z"/>
    <path d="M1755 17.5a4 4 0 0 1 0 6 M1757.5 15a8 8 0 0 1 0 11 M1760 13a11 11 0 0 1 0 15"/>
  </g>
  <rect x="1915" y="0" width="1" height="40" fill="#4a4e55"/>
  <!-- notification -->
  <path d="M1879 12.5h16.5v13h-9l-3.5 3.5v-3.5h-4z" fill="#fff"/>
  <path d="M1882 16h10.5M1882 19h10.5M1882 22h7" stroke="#0b0f16" stroke-width="1"/>
  <circle cx="1894.3" cy="27.8" r="7.5" fill="#2c3036" stroke="#777" stroke-width="1"/>
  <text x="1894.3" y="32" text-anchor="middle" font-family="Liberation Sans" font-weight="700" font-size="11" fill="#fff">1</text>
</svg>
<div class="t" style="left:1772px;top:1054.5px;font-size:11.5px;color:#fff">РУС</div>
<div class="t" style="left:1820.5px;top:1046.3px;font-size:11px;color:#fff">15:02</div>
<div class="t" style="left:1806.5px;top:1064.3px;font-size:11px;color:#fff">23.04.2020</div>

</body></html>
